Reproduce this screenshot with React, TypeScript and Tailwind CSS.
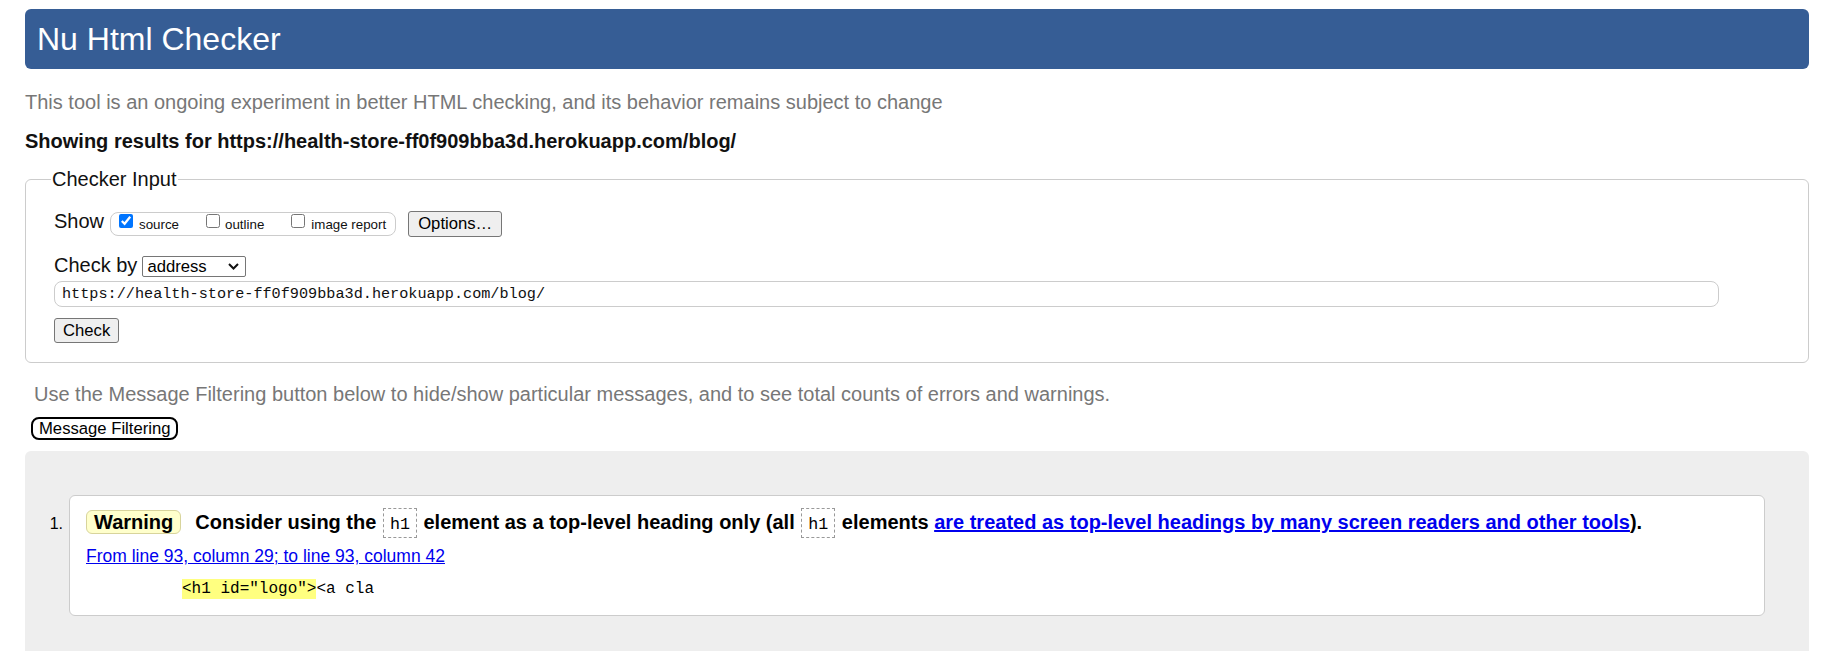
import React from "react";

export default function App() {
  return (
    <div className="min-h-screen bg-white pt-[9px] pl-[25px] pr-[24px] font-['Liberation_Sans',Arial,sans-serif] text-[#111]">
      <header className="h-[60px] rounded-[6px] bg-[#365d95] flex items-center pl-[12px]">
        <h1 className="text-[32px] leading-[37px] text-white font-normal">Nu Html Checker</h1>
      </header>

      <p className="mt-[22px] text-[20px] leading-[23px] text-[#777]">
        This tool is an ongoing experiment in better HTML checking, and its behavior remains subject to change
      </p>
      <p className="mt-[16px] text-[20px] leading-[23px] font-bold text-[#111]">
        Showing results for https://health-store-ff0f909bba3d.herokuapp.com/blog/
      </p>

      <fieldset className="mt-[15px] border border-[#ccc] rounded-[6px] pl-[28px] pr-[28px] pt-[20px] pb-[19px]">
        <legend className="-ml-[3px] px-[1px] text-[20px] leading-[23px] text-[#111]">Checker Input</legend>

        <div className="flex items-start h-[26px]">
          <span className="text-[20px] leading-[20px]">Show</span>
          <div className="ml-[6px] mt-[1px] h-[24px] border border-[#ccc] rounded-[8px] flex items-center pl-[8px] pr-[9px] gap-[27px] text-[13.33px] leading-[15px]">
            <label className="flex items-center gap-[6px]">
              <input type="checkbox" defaultChecked className="w-[14px] h-[14px] mb-[6px]" />
              source
            </label>
            <label className="flex items-center gap-[5px]">
              <input type="checkbox" className="w-[14px] h-[14px] mb-[6px]" />
              outline
            </label>
            <label className="flex items-center gap-[6px]">
              <input type="checkbox" className="w-[14px] h-[14px] mb-[6px]" />
              image report
            </label>
          </div>
          <button className="ml-[12px] h-[26px] px-[9px] border border-[#767676] bg-[#efefef] rounded-[3px] text-[16.67px] leading-[22px] text-black">
            Options…
          </button>
        </div>

        <div className="mt-[18px] flex items-start">
          <span className="text-[20px] leading-[20px]">Check by</span>
          <div className="ml-[5px] mt-[1px] h-[21px] w-[104px] border border-[#767676] rounded-[2px] flex items-center justify-between pl-[4px] pr-[6px] text-[16.67px] leading-[19px] text-black">
            <span>address</span>
            <svg width="11" height="7" viewBox="0 0 11 7" fill="none">
              <path d="M1 1l4.5 4.5L10 1" stroke="#111" strokeWidth="2" />
            </svg>
          </div>
        </div>

        <div className="mt-[4px] h-[26px] w-[1665px] border border-[#ccc] rounded-[8px] flex items-center pl-[7px] font-['Liberation_Mono',monospace] text-[15.2px] text-[#111]">
          https://health-store-ff0f909bba3d.herokuapp.com/blog/
        </div>

        <button className="mt-[11px] block h-[25px] px-[8px] border border-[#767676] bg-[#efefef] rounded-[3px] text-[16.67px] leading-[21px] text-black">
          Check
        </button>
      </fieldset>

      <p className="mt-[20px] pl-[9px] text-[20px] leading-[23px] text-[#777]">
        Use the Message Filtering button below to hide/show particular messages, and to see total counts of errors and warnings.
      </p>
      <button className="mt-[11px] ml-[6px] block h-[23px] px-[6px] border-2 border-black rounded-[8px] bg-white text-[16.67px] leading-[19px] text-black">
        Message Filtering
      </button>

      <div className="mt-[11px] rounded-[6px] bg-[#eeeeee] pl-[19px] pr-[44px] pt-[44px] pb-[44px]">
        <ol className="flex">
          <div className="w-[25px] shrink-0 pt-[19px] pr-[6px] text-right text-[16px] leading-[20px] text-black">1.</div>
          <li className="flex-1 list-none border border-[#ccc] rounded-[6px] bg-white pl-[16px] pr-[16px] pt-[12px] pb-[16px]">
            <div className="flex items-baseline">
              <span className="h-[24px] border border-[#d8d49c] bg-[#ffffcc] rounded-[6px] px-[7px] pt-[1px] leading-[21px] text-[20px] font-bold text-black">
                Warning
              </span>
              <span className="ml-[14px] text-[20px] leading-[23px] font-bold text-black">
                Consider using the{" "}
                <code className="inline-block mx-[1px] border border-dashed border-[#999] px-[6px] pt-[6px] pb-[2px] leading-[20px] font-['Liberation_Mono',monospace] text-[16.67px] font-normal">
                  h1
                </code>{" "}
                element as a top-level heading only (all{" "}
                <code className="inline-block mx-[1px] border border-dashed border-[#999] px-[6px] pt-[6px] pb-[2px] leading-[20px] font-['Liberation_Mono',monospace] text-[16.67px] font-normal">
                  h1
                </code>{" "}
                elements{" "}
                <a className="text-[#0000ee] underline" href="#">
                  are treated as top-level headings by many screen readers and other tools
                </a>
                ).
              </span>
            </div>
            <div className="mt-[8px] text-[17.5px] leading-[20px]">
              <a className="text-[#0000ee] underline" href="#">
                From line 93, column 29; to line 93, column 42
              </a>
            </div>
            <pre className="mt-[13px] font-['Liberation_Mono',monospace] text-[16px] leading-[20px] text-black">
              {"          "}
              <span className="inline-block bg-[#ffff80]">{'<h1 id="logo">'}</span>
              {"<a cla"}
            </pre>
          </li>
        </ol>
      </div>
    </div>
  );
}
